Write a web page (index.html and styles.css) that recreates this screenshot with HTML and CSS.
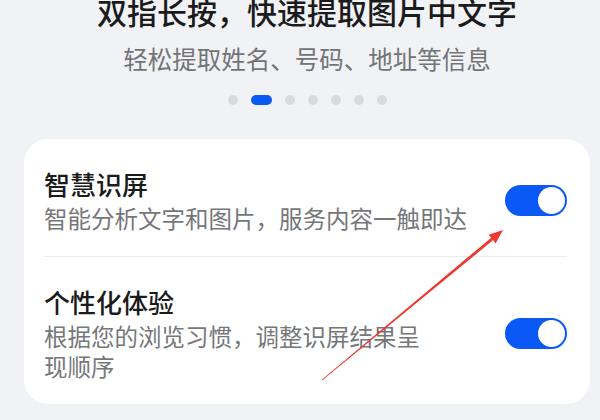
FILE: index.html
```html
<!DOCTYPE html>
<html lang="zh-CN">
<head>
<meta charset="utf-8">
<title>智慧识屏</title>
<link rel="stylesheet" href="styles.css">
</head>
<body>
<div class="page">
  <header class="intro">
    <h1 class="intro-title">双指长按，快速提取图片中文字</h1>
    <p class="intro-sub">轻松提取姓名、号码、地址等信息</p>
    <div class="dots">
      <span class="dot"></span>
      <span class="dot active"></span>
      <span class="dot"></span>
      <span class="dot"></span>
      <span class="dot"></span>
      <span class="dot"></span>
      <span class="dot"></span>
    </div>
  </header>
  <section class="card">
    <div class="row">
      <div class="row-text">
        <div class="row-title">智慧识屏</div>
        <div class="row-desc">智能分析文字和图片，服务内容一触即达</div>
      </div>
      <span class="switch"><span class="knob"></span></span>
    </div>
    <div class="divider"></div>
    <div class="row">
      <div class="row-text">
        <div class="row-title">个性化体验</div>
        <div class="row-desc">根据您的浏览习惯，调整识屏结果呈<br>现顺序</div>
      </div>
      <span class="switch"><span class="knob"></span></span>
    </div>
  </section>
  <svg class="arrow" width="600" height="420" viewBox="0 0 600 420">
    <polygon fill="#ec3a30" points="322.3,380.2 493.2,240.1 495.6,243.4 503,230 488.6,234.8 491.2,237.7 321.7,379.8"/>
  </svg>
</div>
</body>
</html>
```
FILE: styles.css
```css
html, body {
  margin: 0;
  padding: 0;
  background: #f1f2f6;
}
body {
  width: 600px;
  height: 420px;
  overflow: hidden;
  font-family: "Noto Sans CJK SC", "Noto Sans", sans-serif;
}
.page {
  position: relative;
  width: 600px;
  height: 420px;
}
.intro {
  margin: 0 10px 0 24px;
  display: flex;
  flex-direction: column;
  align-items: center;
}
.intro-title {
  margin: 0;
  font-size: 30px;
  line-height: 22px;
  font-weight: 500;
  color: #1b1b1c;
}
.intro-sub {
  margin: 22px 0 0;
  font-size: 24.5px;
  line-height: 30px;
  font-weight: 400;
  color: #737476;
}
.dots {
  margin-top: 21px;
  display: flex;
  align-items: center;
  gap: 13px;
  height: 10px;
}
.dot {
  width: 10px;
  height: 10px;
  border-radius: 50%;
  background: #d9dadf;
}
.dot.active {
  width: 21px;
  border-radius: 5px;
  background: #0a59f7;
}
.card {
  margin: 34px 10px 0 24px;
  background: #ffffff;
  border-radius: 24px;
  padding: 0 23px 0 20px;
}
.row {
  display: flex;
  align-items: center;
  justify-content: space-between;
  padding: 28px 0 23px 0;
}
.row-title {
  font-size: 26px;
  line-height: 34px;
  font-weight: 500;
  color: #1b1b1c;
  margin-bottom: 2px;
}
.row-desc {
  font-size: 23.5px;
  line-height: 30px;
  color: #76777a;
}
.divider {
  height: 1px;
  background: #ececee;
}
.switch {
  flex: none;
  width: 62px;
  height: 31px;
  border-radius: 16px;
  background: #0a59f7;
  display: flex;
  align-items: center;
  justify-content: flex-end;
  padding: 0 2px;
  box-sizing: border-box;
}
.knob {
  width: 27px;
  height: 27px;
  border-radius: 50%;
  background: #ffffff;
}
.arrow {
  position: absolute;
  left: 0;
  top: 0;
  pointer-events: none;
}
```
